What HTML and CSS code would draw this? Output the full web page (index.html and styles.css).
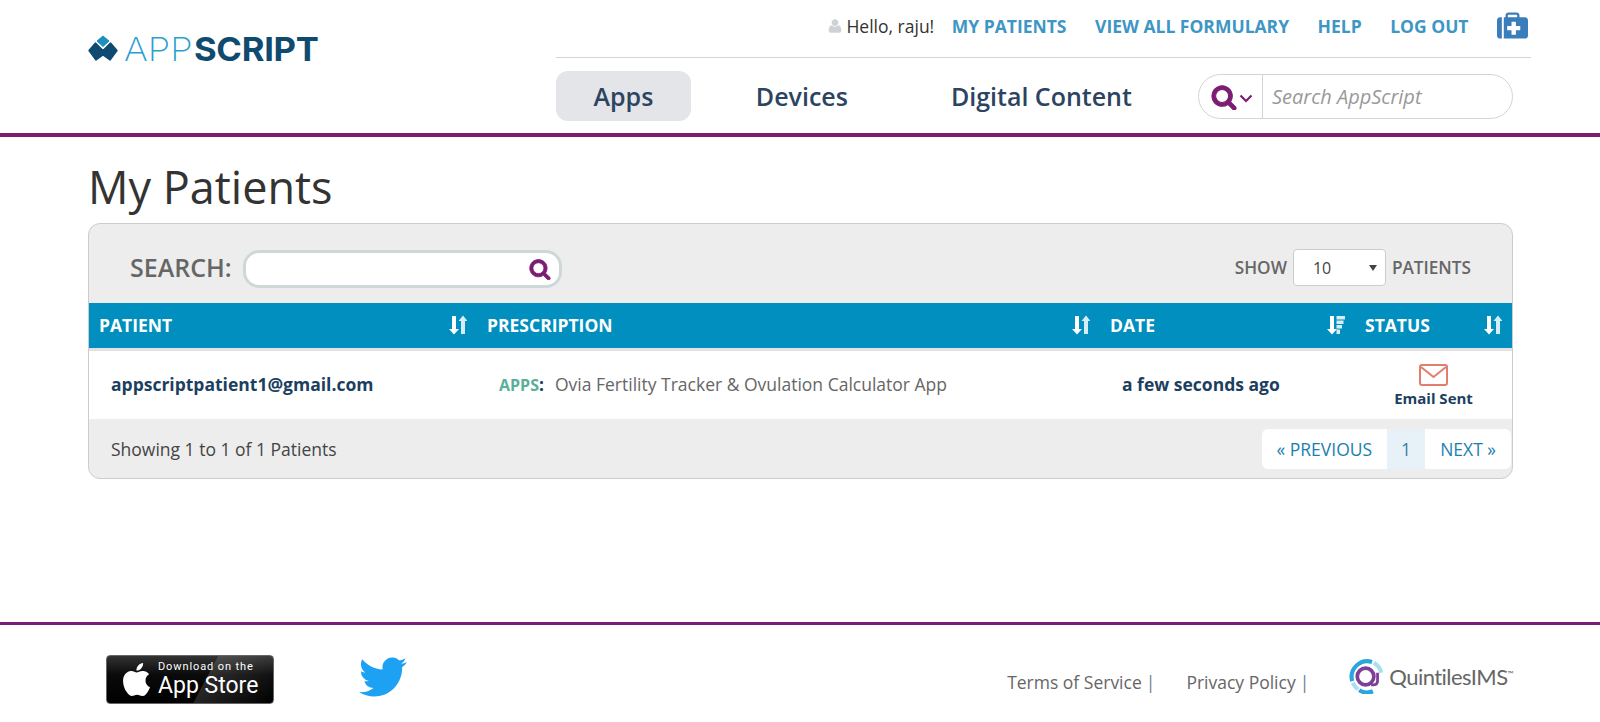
FILE: index.html
```html
<!DOCTYPE html>
<html lang="en">
<head>
<meta charset="utf-8">
<title>My Patients - AppScript</title>
<link rel="stylesheet" href="styles.css">
</head>
<body>
<svg class="defs" width="0" height="0" aria-hidden="true">
  <symbol id="i-search" viewBox="0 0 1792 1792"><path d="M1216 832q0-185-131.5-316.5t-316.5-131.5-316.5 131.5-131.5 316.5 131.5 316.5 316.5 131.5 316.5-131.5 131.5-316.5zm512 832q0 52-38 90t-90 38q-54 0-90-38l-343-342q-179 124-399 124-143 0-273.5-55.5t-225-150-150-225-55.5-273.5 55.5-273.5 150-225 225-150 273.5-55.5 273.5 55.5 225 150 150 225 55.5 273.5q0 220-124 399l343 343q37 37 37 90z"/></symbol>
  <symbol id="i-sort" viewBox="0 0 18 20"><path fill="#fff" d="M3 1h4v13h3l-5 5.500-5-5.500h3z"/><path fill="#d6edf6" d="M14 0.500l4.500 5.500H16v13h-4V6H9.500z"/></symbol>
  <symbol id="i-sort-desc" viewBox="0 0 18 20"><path fill="#fff" d="M3 1h4v13h3l-5 5.500-5-5.500h3z"/><path fill="#d6edf6" d="M9.500 1H18v3.500H9.500zM9.500 5.500H16.500V9H9.500zM9.500 10H15v3.500H9.500zM9.500 14.500H13V19H9.500z"/></symbol>
</svg>

<header class="site-header">
  <a class="logo" href="#">
    <svg class="logo-mark" viewBox="0 0 30 26" aria-hidden="true">
      <path fill="#1b8fc0" stroke="#1b8fc0" stroke-width="1" stroke-linejoin="round" d="M15 1l6 5-6 5.500L9 6z"/>
      <path fill="#0f4a70" stroke="#0f4a70" stroke-width="1.400" stroke-linejoin="round" d="M1 15.500L7.500 8l7.500 7.500L22.500 8 29 15.500 22 25l-7-5-7 5z"/>
    </svg>
    <span class="logo-text"><span class="logo-light">APP</span><span class="logo-bold">SCRIPT</span></span>
  </a>
  <div class="header-main">
    <nav class="top-nav">
      <span class="greeting"><svg class="user-icon" viewBox="0 0 1792 1792" aria-hidden="true"><path d="M1600 1405q0 120-73 189.5t-194 69.5h-874q-121 0-194-69.5t-73-189.500q0-53 3.500-103.500t14-109 26.500-108.500 43-97.500 62-81 85.500-53.500 111.500-20q9 0 42 21.500t74.500 48 108 48 133.500 21.500 133.500-21.500 108-48 74.500-48 42-21.500q61 0 111.500 20t85.500 53.500 62 81 43 97.500 26.500 108.500 14 109 3.500 103.500zm-320-893q0 159-112.500 271.500t-271.500 112.500-271.500-112.500-112.500-271.500 112.500-271.500 271.500-112.500 271.500 112.500 112.500 271.500z"/></svg>Hello, raju!</span>
      <a href="#" class="top-link first">MY PATIENTS</a>
      <a href="#" class="top-link">VIEW ALL FORMULARY</a>
      <a href="#" class="top-link">HELP</a>
      <a href="#" class="top-link">LOG OUT</a>
      <svg class="kit-icon" viewBox="0 0 32 27" aria-hidden="true">
        <path fill="none" stroke="#3b7cbb" stroke-width="2.400" d="M10 6V3.200a2 2 0 0 1 2-2h8a2 2 0 0 1 2 2V6"/>
        <path fill="#3b7cbb" d="M3.500 5H5v22H3.500A3.500 3.500 0 0 1 0 23.500v-15A3.500 3.500 0 0 1 3.500 5z"/>
        <path fill="#3b7cbb" d="M7 5h21.500A3.500 3.500 0 0 1 32 8.500v15a3.500 3.500 0 0 1-3.500 3.500H7z"/>
        <path fill="#fff" d="M15 9.500h4.500V14H24v4.500h-4.500V23H15v-4.500h-4.500V14H15z"/>
      </svg>
    </nav>
    <div class="main-nav">
      <a href="#" class="nav-item active">Apps</a>
      <a href="#" class="nav-item">Devices</a>
      <a href="#" class="nav-item">Digital Content</a>
      <div class="site-search">
        <span class="site-search-btn">
          <svg class="site-search-icon"><use href="#i-search"/></svg>
          <svg class="chev" viewBox="0 0 14 9" aria-hidden="true"><path fill="none" stroke="#7b1d72" stroke-width="2.200" d="M1.500 1.500L7 7l5.500-5.500"/></svg>
        </span>
        <input class="site-search-input" type="text" placeholder="Search AppScript">
      </div>
    </div>
  </div>
</header>

<main class="content">
  <h1 class="page-title">My Patients</h1>
  <section class="panel">
    <div class="panel-top">
      <label class="filter">
        <span class="filter-label">SEARCH:</span>
        <span class="filter-box"><svg class="filter-icon"><use href="#i-search"/></svg></span>
      </label>
      <div class="page-size">
        <span>SHOW</span>
        <span class="select-wrap"><select class="size-select"><option>10</option></select></span>
        <span>PATIENTS</span>
      </div>
    </div>
    <table class="grid">
      <colgroup><col class="c1"><col class="c2"><col class="c3"><col class="c4"></colgroup>
      <thead>
        <tr>
          <th><div class="th-in">PATIENT<svg class="sort"><use href="#i-sort"/></svg></div></th>
          <th><div class="th-in">PRESCRIPTION<svg class="sort"><use href="#i-sort"/></svg></div></th>
          <th><div class="th-in">DATE<svg class="sort"><use href="#i-sort-desc"/></svg></div></th>
          <th><div class="th-in">STATUS<svg class="sort"><use href="#i-sort"/></svg></div></th>
        </tr>
      </thead>
      <tbody>
        <tr>
          <td class="strong">appscriptpatient1@gmail.com</td>
          <td class="rx"><span class="rx-kind">APPS</span><span class="rx-colon">:</span>Ovia Fertility Tracker &amp; Ovulation Calculator App</td>
          <td class="strong">a few seconds ago</td>
          <td class="status">
            <svg class="mail" viewBox="0 0 29 22" aria-hidden="true"><rect x="1" y="1" width="27" height="20" rx="2" fill="none" stroke="#df7f70" stroke-width="2"/><path d="M2 3l12.500 10L27 3" fill="none" stroke="#df7f70" stroke-width="2"/></svg>
            <span class="status-text">Email Sent</span>
          </td>
        </tr>
      </tbody>
    </table>
    <div class="panel-foot">
      <span class="info">Showing 1 to 1 of 1 Patients</span>
      <div class="pager">
        <a href="#" class="pg prev">« PREVIOUS</a>
        <a href="#" class="pg current">1</a>
        <a href="#" class="pg next">NEXT »</a>
      </div>
    </div>
  </section>
</main>

<footer class="site-footer">
  <a href="#" class="badge">
    <svg class="apple" viewBox="0 0 24 24" aria-hidden="true"><path fill="#fff" d="M12.152 6.896c-.948 0-2.415-1.078-3.960-1.040-2.040.027-3.910 1.183-4.961 3.014-2.117 3.675-.546 9.103 1.519 12.090 1.013 1.454 2.208 3.090 3.792 3.039 1.520-.065 2.090-.987 3.935-.987 1.831 0 2.350.987 3.960.948 1.637-.026 2.676-1.480 3.676-2.948 1.156-1.688 1.636-3.325 1.662-3.415-.039-.013-3.182-1.221-3.220-4.857-.026-3.040 2.480-4.494 2.597-4.559-1.429-2.090-3.623-2.324-4.390-2.376-2-.156-3.675 1.090-4.610 1.090zM15.530 3.830c.843-1.012 1.400-2.427 1.245-3.830-1.207.052-2.662.805-3.532 1.818-.780.896-1.454 2.338-1.273 3.714 1.338.104 2.715-.688 3.559-1.701"/></svg>
    <span class="badge-text"><span class="badge-small">Download on the</span><span class="badge-big">App Store</span></span>
  </a>
  <a href="#" class="twitter">
    <svg viewBox="0 0 24 24" aria-hidden="true"><path fill="#1da1f2" d="M23.953 4.570a10 10 0 01-2.825.775 4.958 4.958 0 002.163-2.723c-.951.555-2.005.959-3.127 1.184a4.920 4.920 0 00-8.384 4.482C7.690 8.095 4.067 6.130 1.640 3.162a4.822 4.822 0 00-.666 2.475c0 1.710.870 3.213 2.188 4.096a4.904 4.904 0 01-2.228-.616v.060a4.923 4.923 0 003.946 4.827 4.996 4.996 0 01-2.212.085 4.936 4.936 0 004.604 3.417 9.867 9.867 0 01-6.102 2.105c-.390 0-.779-.023-1.170-.067a13.995 13.995 0 007.557 2.209c9.053 0 13.998-7.496 13.998-13.985 0-.210 0-.420-.015-.630A9.935 9.935 0 0024 4.590z"/></svg>
  </a>
  <div class="foot-links">
    <a href="#" class="foot-link">Terms of Service<span class="bar">|</span></a>
    <a href="#" class="foot-link">Privacy Policy<span class="bar">|</span></a>
  </div>
  <div class="qims">
    <svg class="qims-mark" viewBox="0 0 38 38" aria-hidden="true">
      <path fill="none" stroke="#29a7dc" stroke-width="4.500" d="M25 3.200A17 17 0 0 0 3.500 24"/>
      <path fill="none" stroke="#a9def3" stroke-width="4.500" d="M27 4a17 17 0 0 1 8 11"/>
      <path fill="none" stroke="#a9def3" stroke-width="4.500" d="M4 26a17 17 0 0 0 6 7"/>
      <path fill="none" stroke="#29a7dc" stroke-width="4.500" d="M11 34a17 17 0 0 0 15 1"/>
      <circle cx="18" cy="19" r="9" fill="none" stroke="#7d3f98" stroke-width="4"/>
      <path fill="none" stroke="#7d3f98" stroke-width="3" d="M31 15v9q0 4-4 4h-3"/>
    </svg>
    <span class="qims-text">QuintilesIMS<sup class="tm">™</sup></span>
  </div>
</footer>
</body>
</html>
```

FILE: styles.css
```css
* { box-sizing: border-box; }
html, body { margin: 0; padding: 0; }
body {
  height: 722px;
  overflow: hidden;
  display: flex;
  flex-direction: column;
  background: #fff;
  color: #333;
  font-family: "Open Sans", "Liberation Sans", sans-serif;
  font-size: 17.5px;
}
a { text-decoration: none; color: inherit; }
.defs { position: absolute; }

/* Header */
.site-header {
  height: 137px;
  flex: none;
  display: flex;
  padding-left: 88px;
  border-bottom: 4px solid #7b1d72;
}
.logo {
  width: 468px;
  height: 61px;
  padding-top: 34px;
  display: flex;
  align-items: flex-start;
  gap: 6px;
}
.logo-mark { width: 30px; height: 26px; margin-top: 1px; flex: none; }
.logo-text {
  font-family: Inter, "Liberation Sans", sans-serif;
  font-size: 33px;
  line-height: 30px;
  white-space: nowrap;
}
.logo-light,
.logo-bold { display: inline-block; transform-origin: left center; }
.logo-light { font-weight: 200; color: #2b9fcf; transform: scaleX(1.1); }
.logo-bold { font-weight: 700; color: #0f4a70; letter-spacing: -0.3px; transform: scaleX(1.05); margin-left: 8px; }

.header-main { width: 975px; display: flex; flex-direction: column; }
.top-nav {
  height: 58px;
  flex: none;
  display: flex;
  align-items: center;
  justify-content: flex-end;
  padding-right: 3px;
  padding-bottom: 5px;
  border-bottom: 1px solid #d3d5d6;
  gap: 28.5px;
  white-space: nowrap;
}
.greeting { display: flex; align-items: center; color: #333; font-size: 17.5px; margin-right: -11px; }
.user-icon { width: 16px; height: 16px; margin-right: 3px; fill: #cdd3d4; }
.top-link { font-weight: 700; font-size: 17.5px; color: #3e96c4; }
.kit-icon { width: 31px; height: 27px; margin-top: -1px; }

.main-nav {
  flex: 1;
  display: flex;
  align-items: flex-start;
  gap: 27px;
  padding-top: 13px;
}
.nav-item {
  height: 50px;
  line-height: 50px;
  padding: 0 38px;
  border-radius: 12px;
  font-size: 25px;
  font-weight: 600;
  color: #2c4460;
  white-space: nowrap;
}
.nav-item.active { background: #e4e5e9; padding: 0 37.5px; }
.site-search {
  width: 315px;
  height: 45px;
  margin-top: 3px;
  margin-left: 1px;
  display: flex;
  border: 1px solid #d0d6d8;
  border-radius: 23px;
  overflow: hidden;
}
.site-search-btn {
  width: 64px;
  flex: none;
  display: flex;
  align-items: center;
  padding-left: 12px;
  border-right: 1px solid #d0d6d8;
}
.site-search-icon { width: 26px; height: 26px; fill: #7b1d72; stroke: #7b1d72; stroke-width: 70px; flex: none; }
.chev { width: 14px; height: 9px; margin-left: 2px; margin-top: 3px; flex: none; }
.site-search-input {
  flex: 1;
  min-width: 0;
  border: 0;
  outline: 0;
  padding: 0 9px;
  background: transparent;
  font-family: inherit;
  font-style: italic;
  font-size: 20px;
  color: #333;
}
.site-search-input::placeholder { color: #999; opacity: 1; }

/* Main */
.content { flex: 1; padding: 20px 87px 0 88px; }
.page-title {
  margin: 0 0 6px;
  font-size: 45px;
  line-height: 60px;
  font-weight: 400;
  color: #333;
}
.panel {
  height: 256px;
  display: flex;
  flex-direction: column;
  background: #ededed;
  border: 1px solid #ccc;
  border-radius: 12px;
  overflow: hidden;
}
.panel-top {
  height: 79px;
  flex: none;
  display: flex;
  align-items: center;
  justify-content: space-between;
  padding: 11px 41px 0 41px;
}
.filter { display: flex; align-items: center; gap: 11px; }
.filter-label { font-size: 25px; font-weight: 600; color: #666; line-height: 30px; margin-top: -4px; }
.filter-box {
  width: 319px;
  height: 38px;
  display: flex;
  align-items: center;
  justify-content: flex-end;
  padding-right: 8px;
  background: #fff;
  border: 3px solid #cfd8d8;
  border-radius: 16px;
}
.filter-icon { width: 22px; height: 22px; fill: #7b1d72; stroke: #7b1d72; stroke-width: 70px; }
.page-size {
  display: flex;
  align-items: center;
  gap: 5px;
  font-size: 17.2px;
  font-weight: 600;
  color: #666;
  margin-top: -3px;
}
.select-wrap { position: relative; display: block; margin: 0 1px; height: 37px; }
.select-wrap::after {
  content: "";
  position: absolute;
  right: 9px;
  top: 16px;
  border: 4px solid transparent;
  border-top: 6px solid #444;
  border-bottom: 0;
  pointer-events: none;
}
.size-select {
  display: block;
  width: 93px;
  height: 37px;
  padding: 0 0 0 19px;
  appearance: none;
  -webkit-appearance: none;
  background-color: #fff;
  border: 1px solid #ccc;
  border-radius: 4px;
  font-family: inherit;
  font-size: 16px;
  color: #444;
}

.grid { width: 1423px; table-layout: fixed; border-collapse: separate; border-spacing: 0; flex: none; }
.c1 { width: 388px; }
.c2 { width: 623px; }
.c3 { width: 255px; }
.c4 { width: 157px; }
.grid th {
  height: 48px;
  padding: 0 10px 2px;
  background: #008fbe;
  border-bottom: 3px solid #e2e2e2;
  color: #fff;
  font-size: 17.5px;
  font-weight: 700;
  text-align: left;
}
.th-in { display: flex; align-items: center; justify-content: space-between; }
.sort { width: 18px; height: 20px; }
.grid td {
  height: 68px;
  padding: 0 0 2px 22px;
  background: #fff;
  vertical-align: middle;
}
.strong { font-weight: 700; color: #1c3f60; font-size: 17.5px; }
.rx { color: #666; font-size: 17.5px; }
.rx-kind { font-weight: 700; color: #5ab097; font-size: 16px; }
.rx-colon { font-weight: 700; color: #1c3f60; margin-right: 11px; }
.grid .status { padding: 0; text-align: center; line-height: 1; }
.mail { display: block; width: 29px; height: 22px; margin: 0 auto 4px; }
.status-text { display: block; font-size: 15px; font-weight: 700; color: #1c3f60; line-height: 17px; }

.panel-foot {
  flex: 1;
  display: flex;
  align-items: flex-start;
  justify-content: space-between;
  padding: 10px 1px 0 22px;
}
.info { line-height: 40px; color: #444; }
.pager { display: flex; height: 40px; background: #fff; border-radius: 6px; overflow: hidden; }
.pg { padding: 0 15px; line-height: 40px; color: #1a7fb0; white-space: nowrap; }
.pg.current { padding: 0; width: 38px; text-align: center; background: #e6f2f8; color: #3d7ea3; }

/* Footer */
.site-footer {
  height: 100px;
  flex: none;
  display: flex;
  align-items: flex-start;
  padding: 30px 87px 0 106px;
  border-top: 3px solid #7b1d72;
}
.badge {
  width: 168px;
  height: 49px;
  display: flex;
  align-items: center;
  padding-left: 13px;
  border: 1px solid #666;
  border-radius: 4px;
  background: linear-gradient(118deg, rgba(255,255,255,0) 58%, rgba(255,255,255,.14) 58.500%, rgba(255,255,255,0) 100%), linear-gradient(180deg, #333 0, #0a0a0a 40%, #000 100%);
  color: #fff;
}
.apple { width: 33px; height: 33px; flex: none; margin-right: 5px; }
.badge-text { display: flex; flex-direction: column; font-family: Roboto, "Open Sans", sans-serif; }
.badge-small { font-size: 11px; line-height: 13px; letter-spacing: 0.9px; font-weight: 400; }
.badge-big { font-size: 23px; line-height: 26px; font-weight: 400; }
.twitter { width: 48px; height: 48px; margin-left: 85px; margin-top: -2px; }
.twitter svg { display: block; width: 48px; height: 48px; }
.foot-links {
  margin-left: auto;
  display: flex;
  gap: 31px;
  padding-top: 15px;
  font-size: 17.5px;
  line-height: 24px;
  color: #666;
}
.bar { margin-left: 4px; color: #6f7f8c; }
.qims { display: flex; align-items: center; margin-left: 40px; margin-top: 4px; }
.qims-mark { width: 35px; height: 35px; flex: none; }
.qims-text {
  font-family: Lato, "Open Sans", sans-serif;
  font-size: 22px;
  font-weight: 400;
  letter-spacing: -0.55px;
  color: #666;
  margin-left: 5px;
}
.tm { font-size: 8px; vertical-align: super; line-height: 0; }
```
